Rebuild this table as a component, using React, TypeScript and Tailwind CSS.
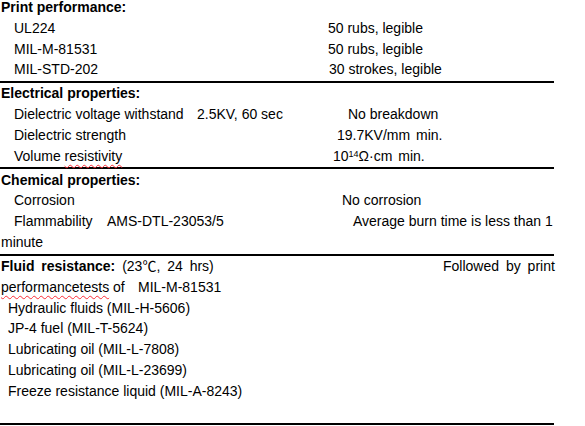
import React from 'react';

const font = { fontFamily: '"Liberation Sans", Arial, "Noto Sans CJK SC", sans-serif' };

function Row({ children }: { children: React.ReactNode }) {
  return <div className="flex items-center h-[20.8px] whitespace-nowrap">{children}</div>;
}

function Rule() {
  return <div className="h-[2px] w-[554px] bg-black my-[0.6px]" />;
}

const Wavy = ({ children }: { children: React.ReactNode }) => (
  <span className="underline decoration-wavy decoration-red-500 decoration-1 underline-offset-[3px]">{children}</span>
);

export default function App() {
  return (
    <div className="w-[585px] h-[426px] bg-white text-black text-[14px] overflow-hidden" style={font}>
      <div className="-mt-[3px]">
        {/* Print performance */}
        <Row><span className="pl-[1px] font-bold">Print performance:</span></Row>
        <Row><span className="w-[328px] pl-[14px]">UL224</span><span>50 rubs, legible</span></Row>
        <Row><span className="w-[328px] pl-[14px]">MIL-M-81531</span><span>50 rubs, legible</span></Row>
        <Row><span className="w-[329px] pl-[14px]">MIL-STD-202</span><span>30 strokes, legible</span></Row>
        <Rule />

        {/* Electrical properties */}
        <Row><span className="pl-[1px] font-bold">Electrical properties:</span></Row>
        <Row>
          <span className="w-[197px] pl-[14px]">Dielectric voltage withstand</span>
          <span className="w-[151px]">2.5KV, 60 sec</span>
          <span>No breakdown</span>
        </Row>
        <Row><span className="w-[337px] pl-[14px]">Dielectric strength</span><span className="[word-spacing:2px]">19.7KV/mm min.</span></Row>
        <Row>
          <span className="w-[333px] pl-[14px]">Volume <Wavy>resistivity</Wavy></span>
          <span className="[word-spacing:2px]">10<sup className="text-[9px] -top-[4px]">14</sup>Ω·cm min.</span>
        </Row>
        <Rule />

        {/* Chemical properties */}
        <Row><span className="pl-[1px] font-bold">Chemical properties:</span></Row>
        <Row><span className="w-[342px] pl-[14px]">Corrosion</span><span>No corrosion</span></Row>
        <Row>
          <span className="w-[107px] pl-[14px]">Flammability</span>
          <span className="w-[246px]">AMS-DTL-23053/5</span>
          <span>Average burn time is less than 1</span>
        </Row>
        <Row><span className="pl-[1px]">minute</span></Row>
        <Rule />

        {/* Fluid resistance */}
        <Row>
          <span className="w-[443px] pl-[1px] [word-spacing:3px]">
            <span className="font-bold">Fluid resistance:</span> (23℃, 24 hrs)
          </span>
          <span className="[word-spacing:3px]">Followed by print</span>
        </Row>
        <Row>
          <span className="w-[138px] pl-[1px]"><Wavy>performancetests</Wavy> of</span>
          <span>MIL-M-81531</span>
        </Row>
        <Row><span className="pl-[8px]">Hydraulic fluids (MIL-H-5606)</span></Row>
        <Row><span className="pl-[8px]">JP-4 fuel (MIL-T-5624)</span></Row>
        <Row><span className="pl-[8px]">Lubricating oil (MIL-L-7808)</span></Row>
        <Row><span className="pl-[8px]">Lubricating oil (MIL-L-23699)</span></Row>
        <Row><span className="pl-[8px]">Freeze resistance liquid (MIL-A-8243)</span></Row>
        <Row><span>&nbsp;</span></Row>
        <Rule />
      </div>
    </div>
  );
}
